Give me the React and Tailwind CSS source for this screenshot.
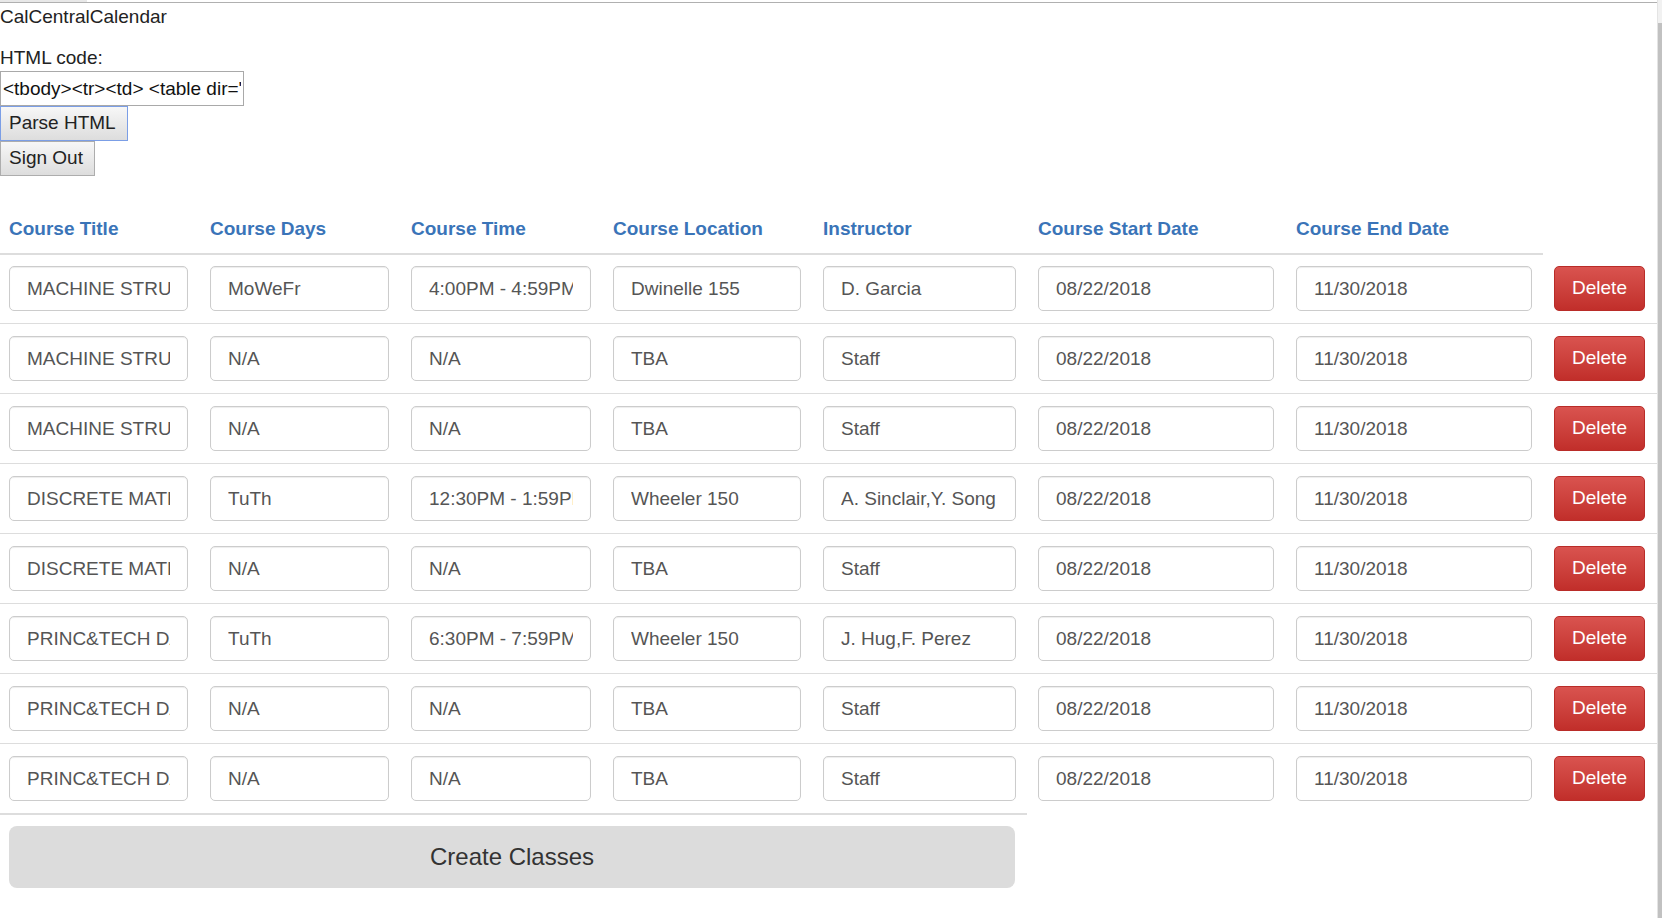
import { useState } from "react";

const courses = [
  { title: "MACHINE STRUCTURES", days: "MoWeFr", time: "4:00PM - 4:59PM", location: "Dwinelle 155", instructor: "D. Garcia" },
  { title: "MACHINE STRUCTURES", days: "N/A", time: "N/A", location: "TBA", instructor: "Staff" },
  { title: "MACHINE STRUCTURES", days: "N/A", time: "N/A", location: "TBA", instructor: "Staff" },
  { title: "DISCRETE MATHEMATICS", days: "TuTh", time: "12:30PM - 1:59PM", location: "Wheeler 150", instructor: "A. Sinclair,Y. Song" },
  { title: "DISCRETE MATHEMATICS", days: "N/A", time: "N/A", location: "TBA", instructor: "Staff" },
  { title: "PRINC&TECH DATA SCI", days: "TuTh", time: "6:30PM - 7:59PM", location: "Wheeler 150", instructor: "J. Hug,F. Perez" },
  { title: "PRINC&TECH DATA SCI", days: "N/A", time: "N/A", location: "TBA", instructor: "Staff" },
  { title: "PRINC&TECH DATA SCI", days: "N/A", time: "N/A", location: "TBA", instructor: "Staff" },
].map((c, i) => ({ ...c, id: i, start: "08/22/2018", end: "11/30/2018" }));

// column widths, in order
const headers = [
  ["Course Title", "w-[179px]"],
  ["Course Days", "w-[179px]"],
  ["Course Time", "w-[180px]"],
  ["Course Location", "w-[188px]"],
  ["Instructor", "w-[193px]"],
  ["Course Start Date", "w-[236px]"],
  ["Course End Date", "w-[236px]"],
];

const fields = ["title", "days", "time", "location", "instructor", "start", "end"];

const inputCls =
  "h-[45px] rounded-[5px] border border-[#ccc] bg-white px-[17px] text-[19px] text-[#555] outline-none shadow-[inset_0_1px_1px_rgba(0,0,0,0.075)]";

const App = () => {
  const [rows, setRows] = useState(courses);
  const [html, setHtml] = useState("<tbody><tr><td> <table dir='ltr'>");

  const handleDelete = (id) => {
    setRows(rows.filter((r) => r.id !== id));
  };

  return (
    <div className="flex h-[918px] overflow-hidden bg-white font-['Liberation_Sans',Arial,sans-serif] text-[19px] text-[#333]">
      <div className="flex-1">
        {/* top edge */}
        <div className="flex h-[2px]">
          <div className="w-[87px] bg-[#e8e8e8]" />
        </div>
        <div className="h-px bg-[#b0b0b0]" />

        <div className="leading-[27px] text-[#222]">CalCentralCalendar</div>
        <div className="mt-[14px] leading-[27px] text-[#222]">HTML code:</div>
        <input
          value={html}
          onChange={(e) => setHtml(e.target.value)}
          className="block h-[35px] w-[244px] border border-[#a9a9a9] px-[2px] text-[19px] text-[#111] outline-none"
        />
        <button className="block h-[35px] w-[128px] border border-[#7b9ee6] bg-linear-to-b from-[#f7f7f7] to-[#dddddd] text-left pl-[8px] text-[#222]">
          Parse HTML
        </button>
        <button className="block h-[35px] w-[95px] border border-[#adadad] bg-linear-to-b from-[#f7f7f7] to-[#dddddd] text-left pl-[8px] text-[#222]">
          Sign Out
        </button>

        {/* table head */}
        <div className="flex h-[79px] w-[1543px] items-end gap-[22px] border-b-2 border-[#ddd] pb-[11px] pl-[9px]">
          {headers.map(([label, w]) => (
            <div key={label} className={`${w} font-bold leading-[27px] text-[#3a74b8]`}>
              {label}
            </div>
          ))}
        </div>

        {/* table body */}
        {rows.map((row, i) => (
          <div
            key={row.id}
            className={`flex items-start gap-[22px] pl-[9px] pb-[12px] ${i === 0 ? "pt-[11px]" : "border-t border-[#ddd] pt-[12px]"}`}
          >
            {fields.map((f, j) => (
              <input key={f} defaultValue={row[f]} className={`${headers[j][1]} ${inputCls}`} />
            ))}
            <button
              onClick={() => handleDelete(row.id)}
              className="h-[45px] w-[91px] rounded-[5px] border border-[#b92c28] bg-linear-to-b from-[#d9534f] to-[#c12e2a] text-[19px] text-white"
            >
              Delete
            </button>
          </div>
        ))}

        {/* footer */}
        <div className="w-[1027px] border-t-2 border-[#ddd] pt-[11px] pl-[9px]">
          <button className="h-[62px] w-[1006px] rounded-[8px] bg-[#dcdcdc] text-[24px] text-[#333]">
            Create Classes
          </button>
        </div>
      </div>

      {/* scrollbar */}
      <div className="flex w-[5px] flex-col border-l border-[#e4e4e4] bg-[#f1f1f1]">
        <div className="h-[23px]" />
        <div className="flex-1 bg-[#c1c1c1]" />
      </div>
    </div>
  );
};

export default App;
